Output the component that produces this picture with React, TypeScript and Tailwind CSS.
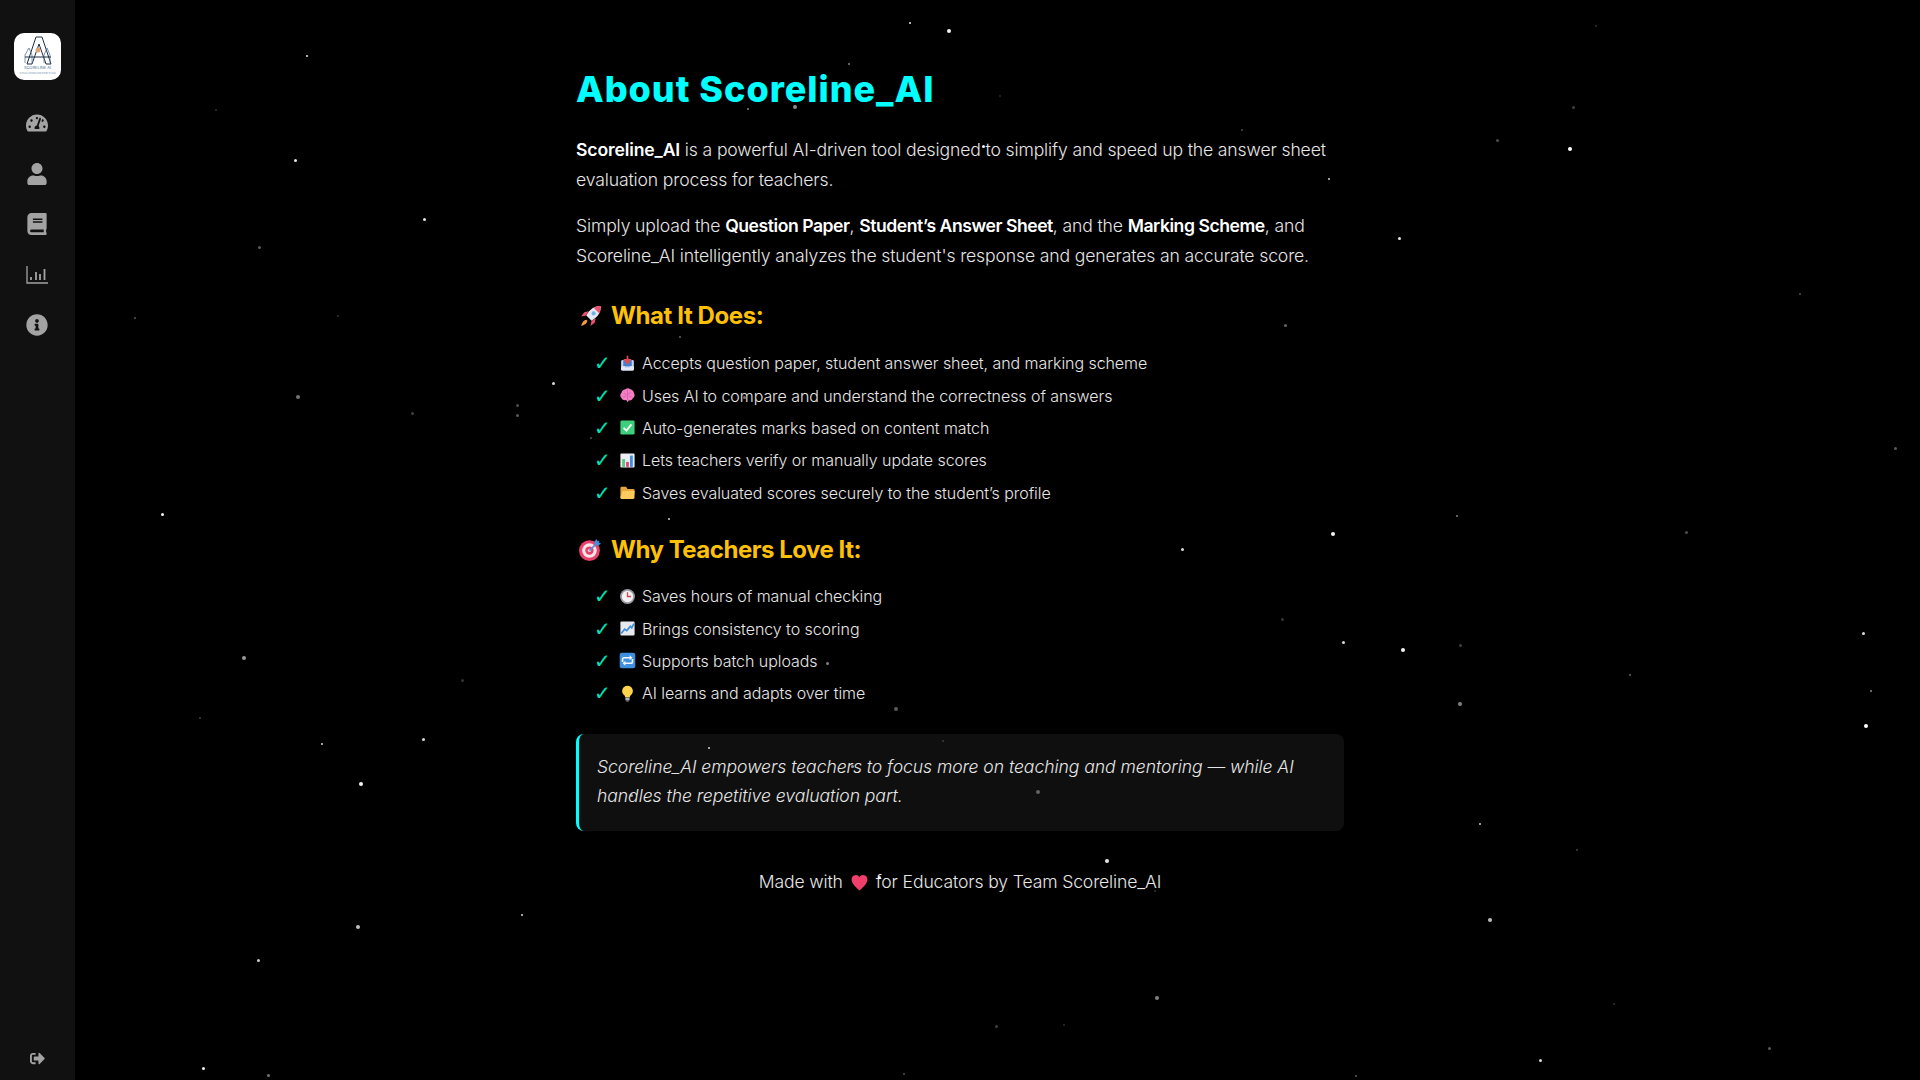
import { FaBook, FaInfoCircle, FaSignOutAlt, FaTachometerAlt, FaUser } from "react-icons/fa";
import type { ReactNode } from "react";

// star positions were read off the 1568px wide view, so they get scaled up
const SCALE = 1920 / 1568;
const stars: [number, number, number, number][] = [
  [743, 19, 2, 0.9], [775, 25, 4, 0.95], [251, 46, 2, 0.9], [693, 52, 2, 0.5], [1303, 21, 2, 0.2], [176, 90, 2, 0.2],
  [1285, 88, 3, 0.25], [649, 87, 4, 0.55], [611, 89, 2, 0.5], [241, 131, 3, 0.9], [1282, 122, 4, 1], [1223, 115, 3, 0.3],
  [803, 120, 3, 0.95], [1014, 106, 2, 0.3], [1085, 146, 2, 0.8], [817, 78, 2, 0.15], [347, 179, 3, 0.9], [212, 202, 3, 0.35],
  [1143, 195, 3, 0.9], [1470, 240, 2, 0.3], [110, 260, 2, 0.35], [276, 258, 2, 0.2], [1050, 266, 3, 0.4], [555, 275, 2, 0.4],
  [243, 324, 4, 0.45], [337, 338, 3, 0.25], [423, 331, 3, 0.3], [423, 339, 3, 0.35], [452, 313, 3, 0.85], [483, 358, 2, 0.35],
  [608, 325, 3, 0.45], [899, 295, 2, 0.7], [1548, 366, 3, 0.35], [133, 420, 3, 0.95], [546, 424, 2, 0.8], [1190, 421, 2, 0.5],
  [1377, 435, 3, 0.3], [1089, 436, 4, 0.95], [966, 449, 3, 0.85], [1047, 506, 3, 0.2], [1097, 525, 3, 0.85], [1146, 531, 4, 0.95],
  [1522, 517, 3, 0.85], [199, 537, 4, 0.6], [1193, 527, 3, 0.25], [1331, 551, 2, 0.4], [378, 556, 3, 0.2], [1528, 564, 2, 0.55],
  [676, 542, 3, 0.5], [732, 579, 4, 0.35], [1192, 575, 4, 0.5], [163, 586, 2, 0.25], [1524, 593, 4, 1], [346, 604, 3, 0.85],
  [263, 608, 2, 0.85], [579, 611, 2, 0.8], [770, 605, 2, 0.2], [295, 640, 4, 0.95], [848, 647, 4, 0.35], [696, 626, 3, 0.6],
  [516, 650, 3, 0.6], [1209, 673, 2, 0.8], [1288, 694, 2, 0.25], [904, 703, 4, 0.9], [718, 717, 3, 0.9], [426, 747, 2, 0.85],
  [292, 757, 4, 0.75], [1217, 751, 4, 0.75], [211, 784, 3, 0.8], [945, 815, 4, 0.5], [814, 838, 3, 0.25], [869, 837, 2, 0.2],
  [1318, 820, 2, 0.2], [943, 728, 2, 0.2], [166, 873, 3, 0.95], [219, 878, 3, 0.45], [1258, 866, 3, 0.85], [1445, 856, 3, 0.35],
  [1107, 879, 2, 0.35], [738, 877, 2, 0.3],
];

const Emoji = ({ children }: { children: ReactNode }) => (
  <svg viewBox="0 0 24 24" className="w-[17px] h-[17px] shrink-0 -mx-[0.5px]">
    {children}
  </svg>
);

const Inbox = () => (
  <Emoji>
    <rect x="3" y="7" width="18" height="15" rx="2" fill="#c9cfe8" />
    <rect x="6" y="7" width="12" height="9" fill="#3b82d6" />
    <path d="M3 16h5l1 2h6l1-2h5v4a2 2 0 0 1-2 2H5a2 2 0 0 1-2-2z" fill="#e6e8f5" />
    <path d="M12 1v7M8.5 7l3.5 5 3.5-5z" stroke="#e5484d" strokeWidth="2.4" fill="#e5484d" />
  </Emoji>
);
const Brain = () => (
  <Emoji>
    <path d="M9 3c2-1.500 5-1.500 7 0 3 .5 5 3 5 5.500 2 2.500 1 6-1.500 7.500-1 2.500-3.500 3.500-6 3l-1 2.500-2.500-3c-3 .5-5.500-.5-6.500-3C1.500 14 1 10 3.500 8 4 5.500 6 3.500 9 3z" fill="#f47fc4" />
    <path d="M12 4v14M7 9c2 0 3 1 3 3M17 8c-2 0-3 1-3 3M6 14c2 0 3-.5 4-1.500M18 14c-2 0-3-.5-4-1.500" stroke="#d95aa6" strokeWidth="1.200" fill="none" />
  </Emoji>
);
const CheckBox = () => (
  <Emoji>
    <rect x="2" y="2" width="20" height="20" rx="2" fill="#3ecf7c" />
    <path d="M6.500 12.500l4 4 7-9" stroke="#f4fff8" strokeWidth="2.600" fill="none" />
  </Emoji>
);
const BarChart = () => (
  <Emoji>
    <rect x="2" y="2" width="20" height="20" rx="1.500" fill="#eceef3" />
    <rect x="4.500" y="10" width="4" height="11" fill="#55c779" />
    <rect x="10" y="14" width="4" height="7" fill="#e8417f" />
    <rect x="15.500" y="5" width="4" height="16" fill="#3f8fe0" />
  </Emoji>
);
const Folder = () => (
  <Emoji>
    <path d="M2 6a2 2 0 0 1 2-2h6l2 3h8a2 2 0 0 1 2 2v10a2 2 0 0 1-2 2H4a2 2 0 0 1-2-2z" fill="#e8a73a" />
    <path d="M5 10h17l-1 9a2 2 0 0 1-2 2H4a2 2 0 0 1-2-2z" fill="#ffcb5c" />
  </Emoji>
);
const Clock = () => (
  <Emoji>
    <circle cx="12" cy="12" r="10.500" fill="#9a9aa3" />
    <circle cx="12" cy="12" r="8" fill="#f3f1f1" />
    <path d="M12 6v6h5" stroke="#d9414f" strokeWidth="1.800" fill="none" />
  </Emoji>
);
const TrendUp = () => (
  <Emoji>
    <rect x="2" y="2" width="20" height="20" rx="1.500" fill="#e8e9ef" />
    <path d="M3 19l5-6 3 2 5-6 2 2 3-6" stroke="#3f8fe0" strokeWidth="2.400" fill="none" />
  </Emoji>
);
const Repeat = () => (
  <Emoji>
    <rect x="1" y="1" width="22" height="22" rx="3" fill="#3f8fe0" />
    <path d="M5 14v-4a2 2 0 0 1 2-2h10M19 10v4a2 2 0 0 1-2 2H7" stroke="#f4f7ff" strokeWidth="2.200" fill="none" />
    <path d="M15 4.500l4 3.500-4 3.500zM9 12.500l-4 3.500 4 3.500z" fill="#f4f7ff" />
  </Emoji>
);
const Bulb = () => (
  <Emoji>
    <path d="M12 1a7.500 7.500 0 0 0-4.500 13.500c1 1 1.200 2 1.200 3h6.600c0-1 .2-2 1.200-3A7.500 7.500 0 0 0 12 1z" fill="#ffd34d" />
    <rect x="9" y="18" width="6" height="4" rx="1" fill="#a8adb8" />
    <rect x="10.500" y="22" width="3" height="1.500" fill="#7d828c" />
  </Emoji>
);
const Rocket = () => (
  <svg viewBox="0 0 24 24" className="w-[25px] h-[25px] shrink-0">
    <path d="M22 2c-6 0-11 3-14 9l5 5c6-3 9-8 9-14z" fill="#e4e6f2" />
    <path d="M22 2c-2.500 0-5 .5-7 1.500L20.500 9C21.500 7 22 4.500 22 2z" fill="#ef4f6e" />
    <circle cx="15" cy="9" r="2" fill="#6cb5e8" />
    <path d="M8 11l-5 1 3-4 4-1zM13 16l-1 5 4-3 1-4z" fill="#ef4f6e" />
    <path d="M8 15c-2 0-4 2-5 6 4-1 6-3 6-5z" fill="#f59a3c" />
  </svg>
);
const Target = () => (
  <svg viewBox="0 0 24 24" className="w-[25px] h-[25px] shrink-0">
    <circle cx="11" cy="13" r="10" fill="#e8416b" />
    <circle cx="11" cy="13" r="7" fill="#f5e6ea" />
    <circle cx="11" cy="13" r="4" fill="#e8416b" />
    <circle cx="11" cy="13" r="1.500" fill="#f5e6ea" />
    <path d="M11 13L20 4" stroke="#5a8fd8" strokeWidth="1.600" />
    <path d="M18 2l1 3 3 1-2.500 2.500-3-1-1-3z" fill="#3f8fe0" />
  </svg>
);
const Heart = () => (
  <svg viewBox="0 0 24 24" className="inline-block w-[19px] h-[19px] align-[-4px] mx-[7px]">
    <path d="M12 22C6 17 2 13 2 8a5.500 5.500 0 0 1 10-3 5.500 5.500 0 0 1 10 3c0 5-4 9-10 14z" fill="#ef3f6a" />
  </svg>
);

const StatsIcon = () => (
  <svg viewBox="0 0 22 20" className="w-[22px] h-[20px]" fill="none" stroke="#a3a3a3">
    <path d="M1 1v17h21" strokeWidth="1.300" />
    <path d="M5 15v-3M10 15V7M14 15V9M18.500 15V4" strokeWidth="1.800" />
  </svg>
);

const Logo = () => (
  <div className="w-[47px] h-[47px] bg-white rounded-[10px] shrink-0">
    <svg viewBox="0 0 47 47" className="w-full h-full">
      <path d="M13 31L22 4h6l9 27h-5l-7-20-7 20z" fill="#fff" stroke="#1f2f45" strokeWidth="1" />
      <path d="M11 30v-8l4-7 3 7v8M30 30v-8l3-7 3 7v8" fill="none" stroke="#5a7ba0" strokeWidth="0.800" />
      <path d="M11 24h26" stroke="#1f2f45" strokeWidth="1" />
      <circle cx="24" cy="17" r="2.500" fill="#d9a679" />
      <text x="23.500" y="36" textAnchor="middle" fontSize="4" fill="#4a6f96" fontFamily="Inter, sans-serif">SCORELINE AI</text>
      <text x="23.500" y="40.500" textAnchor="middle" fontSize="2.200" fill="#6c8db0" fontFamily="Inter, sans-serif">AI EVALUATION FOR EVERY EXAM</text>
    </svg>
  </div>
);

const doesList = [
  { icon: <Inbox />, text: "Accepts question paper, student answer sheet, and marking scheme" },
  { icon: <Brain />, text: "Uses AI to compare and understand the correctness of answers" },
  { icon: <CheckBox />, text: "Auto-generates marks based on content match" },
  { icon: <BarChart />, text: "Lets teachers verify or manually update scores" },
  { icon: <Folder />, text: "Saves evaluated scores securely to the student’s profile" },
];

const loveList = [
  { icon: <Clock />, text: "Saves hours of manual checking" },
  { icon: <TrendUp />, text: "Brings consistency to scoring" },
  { icon: <Repeat />, text: "Supports batch uploads" },
  { icon: <Bulb />, text: "AI learns and adapts over time" },
];

const Rows = ({ items }: { items: { icon: ReactNode; text: string }[] }) => (
  <ul className="flex flex-col pl-[18px]">
    {items.map((item) => (
      <li key={item.text} className="flex items-center h-[32.4px] text-[16px] font-light text-[#e6e6e6] tracking-[-0.004em]">
        <span className="w-[25px] font-['DejaVu_Sans'] font-bold text-[#00e0b8] text-[20px] leading-none">✓</span>
        <span className="flex items-center gap-[7px]">
          {item.icon}
          {item.text}
        </span>
      </li>
    ))}
  </ul>
);

const App = () => {
  const sideIcons = [<FaTachometerAlt />, <FaUser />, <FaBook />, <StatsIcon />, <FaInfoCircle />];

  return (
    <div className="flex h-screen overflow-hidden bg-black font-['Inter',sans-serif] text-white">
      <aside className="w-[75px] shrink-0 bg-[#111111] flex flex-col items-center pt-[33px] pb-[14px] pr-[1px]">
        <Logo />
        <nav className="flex flex-col items-center gap-[28.500px] mt-[32px] text-[22px] text-[#a3a3a3]">
          {sideIcons.map((icon, i) => (
            <div key={i} className="h-[22px] flex items-center justify-center">
              {icon}
            </div>
          ))}
        </nav>
        <div className="mt-auto text-[#a3a3a3] text-[15px]">
          <FaSignOutAlt />
        </div>
      </aside>

      <main className="flex-1 flex justify-center pr-[75px]">
        <div className="w-[768px] pt-[60px]">
          <h1 className="text-[36px] leading-[58px] font-extrabold text-[#00ffff] tracking-[0.027em]">About Scoreline_AI</h1>
          <p className="mt-[17px] text-[17.600px] leading-[30px] font-light text-[#e6e6e6] tracking-[-0.008em]">
            <strong className="font-semibold text-white">Scoreline_AI</strong> is a powerful AI-driven tool designed to simplify and speed up the answer sheet evaluation process for teachers.
          </p>
          <p className="mt-[16px] text-[17.600px] leading-[30px] font-light text-[#e6e6e6] tracking-[-0.008em]">
            Simply upload the <strong className="font-semibold text-white tracking-[-0.026em]">Question Paper</strong>, <strong className="font-semibold text-white tracking-[-0.026em]">Student’s Answer Sheet</strong>, and the <strong className="font-semibold text-white tracking-[-0.026em]">Marking Scheme</strong>, and Scoreline_AI intelligently analyzes the student's response and generates an accurate score.
          </p>

          <h2 className="mt-[26px] mb-[12px] flex items-center gap-[8px] pl-[2px] text-[24px] leading-[38px] font-bold text-[#ffc107] tracking-[-0.017em]">
            <Rocket />
            What It Does:
          </h2>
          <Rows items={doesList} />

          <h2 className="mt-[22px] mb-[11px] flex items-center gap-[8px] pl-[2px] text-[24px] leading-[38px] font-bold text-[#ffc107] tracking-[-0.02em]">
            <Target />
            Why Teachers Love It:
          </h2>
          <Rows items={loveList} />

          <blockquote className="mt-[24px] h-[97px] rounded-[8px] border-l-[3px] border-[#00ffff] bg-[#0f0f0f] pl-[18px] pr-[20px] pt-[18px] text-[17.600px] leading-[29px] font-light italic text-[#e6e6e6] tracking-[-0.004em]">
            Scoreline_AI empowers teachers to focus more on teaching and mentoring — while AI handles the repetitive evaluation part.
          </blockquote>

          <p className="mt-[36px] text-center text-[17.600px] leading-[30px] font-light text-[#e6e6e6] tracking-[-0.008em]">
            Made with
            <Heart />
            for Educators by Team Scoreline_AI
          </p>
        </div>
      </main>

      {/* star field floats over everything, same as the particle canvas */}
      <div className="fixed inset-0 pointer-events-none">
        {stars.map(([x, y, size, alpha], i) => (
          <span
            key={i}
            className="absolute rounded-full bg-white"
            style={{ left: x * SCALE - size / 2, top: y * SCALE - size / 2, width: size, height: size, opacity: alpha }}
          />
        ))}
      </div>
    </div>
  );
};

export default App;
